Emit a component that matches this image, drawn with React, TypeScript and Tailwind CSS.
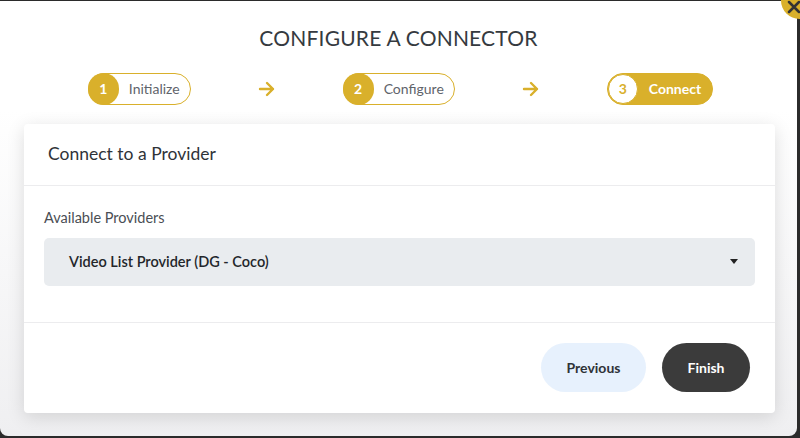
import React from "react";

const Y = "#d9b02b";

function Arrow() {
  return (
    <svg width="18" height="16" viewBox="0 0 18 16" fill="none">
      <path d="M2 8h13M9 2l6 6-6 6" stroke={Y} strokeWidth="2.4" strokeLinecap="round" strokeLinejoin="round" />
    </svg>
  );
}

function Step({ n, label, active }: { n: number; label: string; active?: boolean }) {
  if (active) {
    return (
      <div className="flex h-[32px] items-center rounded-full border border-[#d9b02b] bg-[#d9b02b] pr-[11px]">
        <div className="flex h-[30px] w-[30px] items-center justify-center rounded-full border border-[#d9b02b] bg-white text-[14px] font-bold text-[#d9b02b]">
          {n}
        </div>
        <span className="ml-[11px] text-[14px] font-bold text-white">{label}</span>
      </div>
    );
  }
  return (
    <div className="flex h-[32px] items-center rounded-full border border-[#d9b02b] bg-white pr-[10px]">
      <div className="-ml-px flex h-[32px] w-[31px] items-center justify-center rounded-full bg-[#d9b02b] text-[14px] font-bold text-white">
        {n}
      </div>
      <span className="ml-[10px] text-[14px] text-[#5f646b]">{label}</span>
    </div>
  );
}

export default function App() {
  return (
    <div
      className="relative h-[438px] w-[800px] overflow-hidden bg-[#2b2b2b]"
      style={{ fontFamily: "Lato, 'Noto Sans', sans-serif" }}
    >
      <div className="absolute left-0 top-[1px] h-[435px] w-[797px] rounded-b-[8px] bg-gradient-to-b from-white from-[25%] to-[#efeff1]">
        <div className="flex flex-col items-center pt-[21px]">
          <h1 className="text-[21px] font-normal tracking-[0.2px] text-[#353a40]">CONFIGURE A CONNECTOR</h1>
          <div className="ml-[4px] mt-[19px] flex items-center gap-[67px]">
            <Step n={1} label="Initialize" />
            <Arrow />
            <Step n={2} label="Configure" />
            <Arrow />
            <Step n={3} label="Connect" active />
          </div>
        </div>
        <div className="mx-[24px] mt-[19px] w-[751px] rounded-[4px] bg-white shadow-[0_4px_18px_rgba(0,0,0,0.13)]">
          <div className="flex h-[62px] items-center border-b border-[#ececee] px-[24px]">
            <span className="text-[17.5px] text-[#2f3338]">Connect to a Provider</span>
          </div>
          <div className="px-[20px] pb-[36px] pt-[22px]">
            <div className="text-[14.5px] leading-[20px] text-[#4a4e54]">Available Providers</div>
            <div className="mt-[10px] flex h-[48px] items-center justify-between rounded-[5px] bg-[#e9ecef] pl-[25px] pr-[17px]">
              <span className="text-[14.5px] font-semibold text-[#23262a]">Video List Provider (DG - Coco)</span>
              <svg width="8" height="5" viewBox="0 0 8 5">
                <path d="M0 0h8L4 5z" fill="#222" />
              </svg>
            </div>
          </div>
          <div className="flex items-center justify-end gap-[16px] border-t border-[#ececee] pb-[21px] pl-[20px] pr-[25px] pt-[20px]">
            <button className="flex h-[49px] w-[105px] items-center justify-center rounded-full bg-[#e7f1fd] text-[14px] font-bold text-[#2f3338]">
              Previous
            </button>
            <button className="flex h-[49px] w-[88px] items-center justify-center rounded-full bg-[#3b3b3b] text-[14px] font-bold text-white">
              Finish
            </button>
          </div>
        </div>
      </div>
      <div className="absolute right-[-18px] top-[-18px] flex h-[37px] w-[37px] items-center justify-center rounded-full bg-[#d9b02b]">
        <svg width="14" height="14" viewBox="0 0 14 14" className="-translate-x-[6px] translate-y-[6px]">
          <path d="M2 2l10 10M12 2L2 12" stroke="#333" strokeWidth="2.5" strokeLinecap="round" />
        </svg>
      </div>
    </div>
  );
}
